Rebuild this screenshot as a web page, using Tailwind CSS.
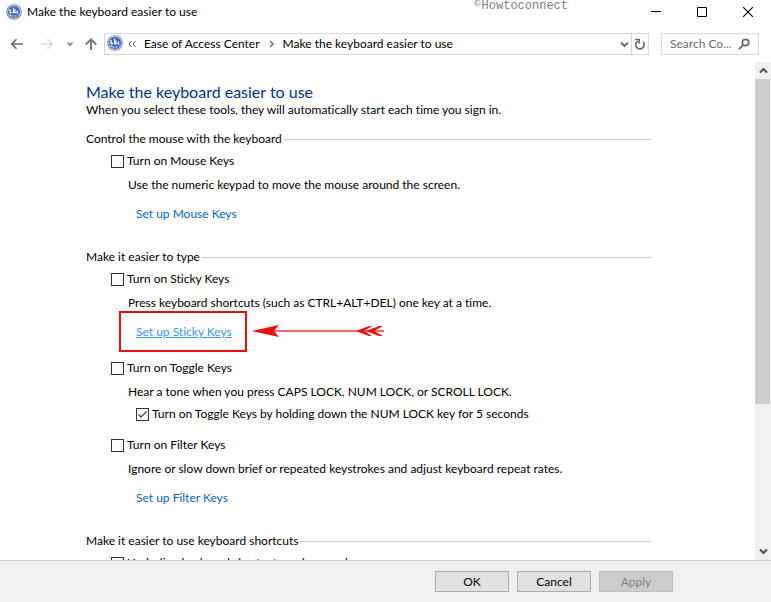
<!DOCTYPE html>
<html lang="en">
  <head>
    <meta charset="UTF-8" />
    <meta name="viewport" content="width=device-width, initial-scale=1" />
    <title>Make the keyboard easier to use</title>
    <script src="https://cdn.jsdelivr.net/npm/@tailwindcss/browser@4"></script>
  </head>
  <body class="h-screen flex flex-col overflow-hidden bg-white text-black text-[12px] leading-5 font-['Lato','Open_Sans',sans-serif] [font-variant-ligatures:none]">

    <!-- Shared icon -->
    <svg class="hidden">
      <symbol id="ease-icon" viewBox="0 0 16 16">
        <circle cx="8" cy="8" r="7.8" fill="#858585" />
        <circle cx="8" cy="8" r="6.9" fill="#c9ccd3" />
        <circle cx="8" cy="8" r="6" fill="#3263d6" />
        <path d="M7.500 3.500v5h4M4 5v3.500h2M9.500 5.500l-2 3M4 10.500l1 1M11.500 8.500v-2" fill="none" stroke="#fff" stroke-width="1.300" />
        <path d="M5.500 12h5M12 10.500l.5-1" fill="none" stroke="#fff" stroke-dasharray="2 1" />
      </symbol>
    </svg>

    <!-- Title bar -->
    <header class="h-6 shrink-0 flex items-center pl-[6px]">
      <svg class="size-4"><use href="#ease-icon" /></svg>
      <h1 class="ml-[5px]">Make the keyboard easier to use</h1>
      <p class="ml-auto mr-[65px] self-start flex leading-3 text-[#808080] font-['Liberation_Mono',monospace]"><span class="w-[7px] text-[10px] leading-[10px]">©</span>Howtoconnect</p>
      <button class="w-[46px] h-6 flex justify-center items-center" aria-label="Minimize">
        <svg class="size-[10px]" viewBox="0 0 10 10" shape-rendering="crispEdges"><path d="M0 4h10v1H0z" /></svg>
      </button>
      <button class="w-[46px] h-6 flex justify-center items-center" aria-label="Maximize">
        <svg class="size-[10px]" viewBox="0 0 10 10" fill="none" stroke="#000"><path d="M.5.5h9v9h-9z" /></svg>
      </button>
      <button class="w-[46px] h-6 flex justify-center items-center" aria-label="Close">
        <svg class="size-[10px]" viewBox="0 0 10 10" fill="none" stroke="#000" stroke-width="1.1"><path d="M0 0l10 10M10 0L0 10" /></svg>
      </button>
    </header>

    <!-- Navigation row -->
    <nav class="h-[38px] shrink-0 flex items-center pl-[10px] pr-3 pt-[2px]">
      <button aria-label="Back">
        <svg class="w-[14px] h-3" viewBox="0 0 14 12" fill="none" stroke="#6b6b6b" stroke-width="1.6"><path d="M13 6H2M6.500 1.200L1.700 6l4.800 4.800" /></svg>
      </button>
      <button class="ml-4" aria-label="Forward">
        <svg class="w-[14px] h-3" viewBox="0 0 14 12" fill="none" stroke="#dcdcdc" stroke-width="1.6"><path d="M1 6h11M7.500 1.200L12.300 6l-4.800 4.800" /></svg>
      </button>
      <button class="ml-3" aria-label="Recent pages">
        <svg class="w-2 h-3" viewBox="0 0 8 12" fill="none" stroke="#808080" stroke-width="1.600"><path d="M1.500 4.500L4 7l2.500-2.500" /></svg>
      </button>
      <button class="ml-[10px]" aria-label="Up">
        <svg class="w-[14px] h-3" viewBox="0 0 14 12" fill="none" stroke="#777" stroke-width="1.900"><path d="M7 12V1.500M1.800 6.500L7 1.300l5.200 5.200" /></svg>
      </button>
      <div class="ml-[6px] flex-1 h-[22px] flex items-center border border-[#d9d9d9]">
        <svg class="ml-[2px] mb-[2px] size-4"><use href="#ease-icon" /></svg>
        <svg class="ml-[5px] w-2 h-2" viewBox="0 0 8 8" fill="none" stroke="#555"><path d="M3.500 1L1 4l2.500 3M7.500 1L5 4l2.500 3" /></svg>
        <a href="#" class="ml-2">Ease of Access Center</a>
        <svg class="mx-2 w-[7px] h-2" viewBox="0 0 7 8" fill="none" stroke="#777" stroke-width="1.600"><path d="M2 1l3 3-3 3" /></svg>
        <a href="#">Make the keyboard easier to use</a>
        <button class="ml-auto mr-[2px]" aria-label="Previous locations">
          <svg class="w-[9px] h-[7px]" viewBox="0 0 9 7" fill="none" stroke="#6b6b6b" stroke-width="2"><path d="M1 1.500l3.500 3.500L8 1.500" /></svg>
        </button>
        <button class="w-[17px] h-full flex justify-center items-center border-l border-[#d9d9d9]" aria-label="Refresh">
          <svg class="size-3" viewBox="0 0 12 12" fill="none" stroke="#6b6b6b" stroke-width="1.700"><path d="M3.600 3.200a4.200 4.200 0 1 0 5.400.6M1.200 1.500h4v4" /></svg>
        </button>
      </div>
      <div class="ml-3 w-[98px] h-[22px] flex items-center border border-[#d9d9d9] pl-2 pr-2">
        <input type="text" aria-label="Search Control Panel" placeholder="Search Co..." class="min-w-0 flex-1 placeholder:text-[#6d6d6d] focus:outline-none" />
        <svg class="size-3" viewBox="0 0 12 12" fill="none" stroke="#6b6b6b" stroke-width="1.800"><circle cx="7.500" cy="4.500" r="3.200" /><path d="M5.200 7L1 11.200" /></svg>
      </div>
    </nav>

    <!-- Scrolling page -->
    <div class="flex-1 min-h-0 flex">
      <main class="flex-1 overflow-hidden pl-[86px] pr-[104px] pt-5">
        <h2 class="text-[16px] leading-5 text-[#003399]">Make the keyboard easier to use</h2>
        <p class="-mt-[2px]">When you select these tools, they will automatically start each time you sign in.</p>

        <!-- Mouse -->
        <section class="mt-[9px]">
          <h3 class="flex items-center gap-[2px] after:flex-1 after:h-px after:bg-[#ccc]">Control the mouse with the keyboard</h3>
          <label class="mt-[2px] ml-[25px] flex items-center gap-[3px]">
            <input type="checkbox" class="appearance-none size-[13px] border border-[#333] bg-white" />
            Turn on Mouse Keys
          </label>
          <p class="mt-1 ml-[42px]">Use the numeric keypad to move the mouse around the screen.</p>
          <p class="mt-[9px] ml-[50px]"><a href="#" class="text-[#0066cc]">Set up Mouse Keys</a></p>
        </section>

        <!-- Typing -->
        <section class="mt-[23px]">
          <h3 class="flex items-center gap-[2px] after:flex-1 after:h-px after:bg-[#ccc]">Make it easier to type</h3>
          <label class="mt-[2px] ml-[25px] flex items-center gap-[3px]">
            <input type="checkbox" class="appearance-none size-[13px] border border-[#333] bg-white" />
            Turn on Sticky Keys
          </label>
          <p class="mt-1 ml-[42px]">Press keyboard shortcuts (such as CTRL+ALT+DEL) one key at a time.</p>
          <div class="mt-[9px] ml-[50px] relative w-fit">
            <a href="#" class="text-[#3399ff] underline">Set up Sticky Keys</a>
            <!-- Callout box and arrow -->
            <div class="absolute -left-[17px] -top-[11px] w-32 h-[41px] border-2 border-[#f00c0c] pointer-events-none"></div>
            <svg class="absolute left-[116px] top-[3px] w-[132px] h-3 pointer-events-none" viewBox="0 0 132 12">
              <path d="M20 5h112v2H20z" fill="#fb6a6a" />
              <path d="M0 6L27 0 22 6l5 6z" fill="#f00c0c" />
              <path d="M104 6l13-5h3l-8 5 8 5h-3zM114 6l13-5h4l-9 5 9 5h-4z" fill="#f00c0c" />
            </svg>
          </div>

          <label class="mt-4 ml-[25px] flex items-center gap-[3px]">
            <input type="checkbox" class="appearance-none size-[13px] border border-[#333] bg-white" />
            Turn on Toggle Keys
          </label>
          <p class="mt-1 ml-[42px]">Hear a tone when you press CAPS LOCK, NUM LOCK, or SCROLL LOCK.</p>
          <label class="mt-[2px] ml-[50px] flex items-center gap-[3px]">
            <span class="grid size-[13px]">
              <input type="checkbox" checked class="peer col-start-1 row-start-1 appearance-none size-[13px] border border-[#333] bg-white" />
              <svg class="col-start-1 row-start-1 size-[13px] invisible peer-checked:visible pointer-events-none" viewBox="0 0 13 13" fill="none" stroke="#444" stroke-width="1.300"><path d="M2.500 6.500L5 9l5.500-5.500" /></svg>
            </span>
            Turn on Toggle Keys by holding down the NUM LOCK key for 5 seconds
          </label>

          <label class="mt-[11px] ml-[25px] flex items-center gap-[3px]">
            <input type="checkbox" class="appearance-none size-[13px] border border-[#333] bg-white" />
            Turn on Filter Keys
          </label>
          <p class="mt-1 ml-[42px]">Ignore or slow down brief or repeated keystrokes and adjust keyboard repeat rates.</p>
          <p class="mt-[9px] ml-[50px]"><a href="#" class="text-[#0066cc]">Set up Filter Keys</a></p>
        </section>

        <!-- Shortcuts -->
        <section class="mt-[23px]">
          <h3 class="flex items-center gap-[2px] after:flex-1 after:h-px after:bg-[#ccc]">Make it easier to use keyboard shortcuts</h3>
          <label class="mt-[2px] ml-[25px] flex items-center gap-[3px]">
            <input type="checkbox" class="appearance-none size-[13px] border border-[#333] bg-white" />
            Underline keyboard shortcuts and access keys
          </label>
        </section>
      </main>

      <!-- Scrollbar -->
      <div class="w-4 flex flex-col bg-[#f0f0f0]">
        <button class="h-[17px] flex justify-center items-center" aria-label="Scroll up">
          <svg class="w-[9px] h-[7px]" viewBox="0 0 9 7" fill="none" stroke="#505050" stroke-width="2"><path d="M1 5.500L4.500 2 8 5.500" /></svg>
        </button>
        <div class="flex-1"><div class="h-[70%] w-[15px] bg-[#cdcdcd]"></div></div>
        <button class="h-[17px] flex justify-center items-center" aria-label="Scroll down">
          <svg class="w-[9px] h-[7px]" viewBox="0 0 9 7" fill="none" stroke="#505050" stroke-width="2"><path d="M1 1.500L4.500 5 8 1.500" /></svg>
        </button>
      </div>
    </div>

    <!-- Footer -->
    <footer class="h-[42px] shrink-0 flex justify-end items-center gap-2 pr-[98px] bg-[#f0f0f0] border-t border-[#ccc]">
      <button class="w-[74px] h-[21px] flex justify-center items-center border border-[#adadad] bg-[#e1e1e1]">OK</button>
      <button class="w-[74px] h-[21px] flex justify-center items-center border border-[#adadad] bg-[#e1e1e1]">Cancel</button>
      <button disabled class="w-[74px] h-[21px] flex justify-center items-center border border-[#bfbfbf] bg-[#ccc] text-[#838383]">Apply</button>
    </footer>

  </body>
</html>
